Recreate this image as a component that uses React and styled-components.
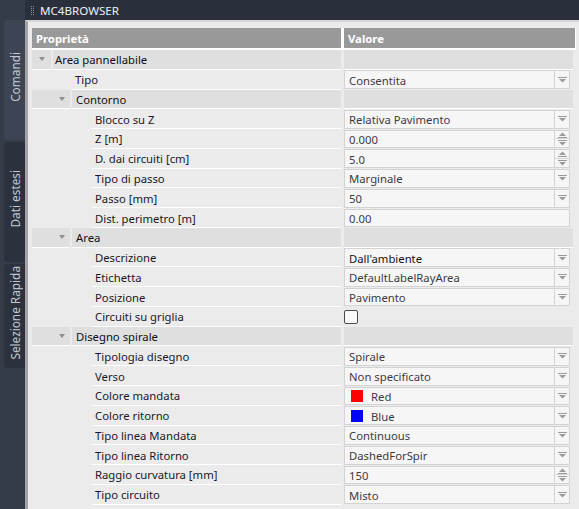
import React from "react";
import styled, { createGlobalStyle } from "styled-components";

const rows = [
  { kind: "cat", level: 0, label: "Area pannellabile" },
  { kind: "prop", level: 1, label: "Tipo", type: "select", value: "Consentita" },
  { kind: "cat", level: 1, label: "Contorno" },
  { kind: "prop", level: 2, label: "Blocco su Z", type: "select", value: "Relativa Pavimento" },
  { kind: "prop", level: 2, label: "Z [m]", type: "spin", value: "0.000" },
  { kind: "prop", level: 2, label: "D. dai circuiti [cm]", type: "spin", value: "5.0" },
  { kind: "prop", level: 2, label: "Tipo di passo", type: "select", value: "Marginale" },
  { kind: "prop", level: 2, label: "Passo [mm]", type: "select", value: "50" },
  { kind: "prop", level: 2, label: "Dist. perimetro [m]", type: "text", value: "0.00" },
  { kind: "cat", level: 1, label: "Area" },
  { kind: "prop", level: 2, label: "Descrizione", type: "select", value: "Dall'ambiente", strong: true },
  { kind: "prop", level: 2, label: "Etichetta", type: "select", value: "DefaultLabelRayArea" },
  { kind: "prop", level: 2, label: "Posizione", type: "select", value: "Pavimento" },
  { kind: "prop", level: 2, label: "Circuiti su griglia", type: "check" },
  { kind: "cat", level: 1, label: "Disegno spirale" },
  { kind: "prop", level: 2, label: "Tipologia disegno", type: "select", value: "Spirale" },
  { kind: "prop", level: 2, label: "Verso", type: "select", value: "Non specificato" },
  { kind: "prop", level: 2, label: "Colore mandata", type: "select", value: "Red", swatch: "#ff0000" },
  { kind: "prop", level: 2, label: "Colore ritorno", type: "select", value: "Blue", swatch: "#0000ff" },
  { kind: "prop", level: 2, label: "Tipo linea Mandata", type: "select", value: "Continuous" },
  { kind: "prop", level: 2, label: "Tipo linea Ritorno", type: "select", value: "DashedForSpir" },
  { kind: "prop", level: 2, label: "Raggio curvatura [mm]", type: "spin", value: "150" },
  { kind: "prop", level: 2, label: "Tipo circuito", type: "select", value: "Misto" },
];

function DownArrow() {
  return (
    <svg width="9" height="6" viewBox="0 0 9 6">
      <rect x="0" y="0" width="9" height="1" fill="#9a9a9a" />
      <path d="M1 2 H8 L4.5 5.5 Z" fill="#9a9a9a" />
    </svg>
  );
}

function UpArrow() {
  return (
    <svg width="9" height="6" viewBox="0 0 9 6">
      <path d="M1 4 H8 L4.5 0.5 Z" fill="#9a9a9a" />
      <rect x="0" y="5" width="9" height="1" fill="#9a9a9a" />
    </svg>
  );
}

function GripDots() {
  const dots = [];
  for (let i = 0; i < 5; i++) {
    dots.push(<rect key={"a" + i} x="0" y={i * 2} width="1" height="1" fill="#8d94a0" />);
    dots.push(<rect key={"b" + i} x="2" y={i * 2} width="1" height="1" fill="#8d94a0" />);
  }
  return (
    <svg width="3" height="9" viewBox="0 0 3 9">
      {dots}
    </svg>
  );
}

function ValueCell({ row }) {
  if (row.type === "check") {
    return (
      <Value>
        <Checkbox />
      </Value>
    );
  }
  return (
    <Value>
      <Box>
        <BoxText $strong={row.strong}>
          {row.swatch && <Swatch $color={row.swatch} />}
          {row.value}
        </BoxText>
        {row.type === "select" && (
          <ArrowZone>
            <DownArrow />
          </ArrowZone>
        )}
        {row.type === "spin" && (
          <SpinZone>
            <SpinHalf $top>
              <UpArrow />
            </SpinHalf>
            <SpinHalf>
              <DownArrow />
            </SpinHalf>
          </SpinZone>
        )}
      </Box>
    </Value>
  );
}

function Row({ row }) {
  if (row.kind === "cat") {
    return (
      <RowLine>
        <LabelPart>
          <Expander $level={row.level}>
            <Caret />
          </Expander>
          <CatLabel $level={row.level}>{row.label}</CatLabel>
        </LabelPart>
        <CatValue />
      </RowLine>
    );
  }
  return (
    <RowLine>
      <LabelPart>
        <PropLabel $level={row.level}>{row.label}</PropLabel>
      </LabelPart>
      <ValueCell row={row} />
    </RowLine>
  );
}

export default function App() {
  return (
    <>
      <GlobalStyle />
      <Window>
        <Sidebar>
          <Tab $active $h={120}>
            <TabText>Comandi</TabText>
          </Tab>
          <Tab $h={120}>
            <TabText>Dati estesi</TabText>
          </Tab>
          <Tab $h={104}>
            <TabText>Selezione Rapida</TabText>
          </Tab>
        </Sidebar>
        <Main>
          <TitleBar>
            <GripDots />
            MC4BROWSER
          </TitleBar>
          <Panel>
            <Grid>
              <HeaderRow>
                <HeadCell $w="309px">Proprietà</HeadCell>
                <HeadCell $w="auto">Valore</HeadCell>
              </HeaderRow>
              {rows.map((r) => (
                <Row key={r.label} row={r} />
              ))}
            </Grid>
          </Panel>
        </Main>
      </Window>
    </>
  );
}

const GlobalStyle = createGlobalStyle`
  html, body {
    margin: 0;
    padding: 0;
    background: #363d4b;
  }
  body {
    font-family: "Noto Sans", "Open Sans", sans-serif;
    font-size: 11.3px;
  }
`;

const Window = styled.div`
  display: flex;
  width: 579px;
  height: 509px;
  overflow: hidden;
`;

const Sidebar = styled.div`
  width: 25px;
  flex-shrink: 0;
  display: flex;
  flex-direction: column;
  gap: 2px;
  padding-top: 20px;
  background: #353c49;
`;

const Tab = styled.div`
  height: ${(p) => p.$h}px;
  margin-left: 4px;
  border-radius: 4px 0 0 4px;
  background: ${(p) => (p.$active ? "#3d4555" : "#2b323e")};
  display: flex;
  align-items: center;
  justify-content: center;
`;

const TabText = styled.span`
  writing-mode: vertical-rl;
  transform: rotate(180deg);
  color: #c4c9d2;
  font-size: 11.8px;
  white-space: nowrap;
  padding-top: 6px;
`;

const Main = styled.div`
  flex: 1;
  display: flex;
  flex-direction: column;
  min-width: 0;
`;

const TitleBar = styled.div`
  height: 20px;
  background: #2a303b;
  color: #eef0f4;
  display: flex;
  align-items: center;
  padding-left: 6px;
  font-size: 11.6px;
  gap: 6px;
`;

const Panel = styled.div`
  flex: 1;
  background: #ebebeb;
  border-top: 2px solid #d6d6d6;
  border-left: 3px solid #a3a3a3;
  padding: 6px 0 0 4px;
`;

const Grid = styled.div`
  width: 544px;
  display: flex;
  flex-direction: column;
`;

const HeaderRow = styled.div`
  display: flex;
  gap: 3px;
  height: 20px;
  background: #ffffff;
  border-bottom: 2px solid #ffffff;
  border-right: 1px solid #ffffff;
`;

const HeadCell = styled.div`
  width: ${(p) => p.$w};
  flex: ${(p) => (p.$w === "auto" ? 1 : "none")};
  background: #999999;
  color: #ffffff;
  font-weight: bold;
  display: flex;
  align-items: center;
  padding: 1px 0 0 4px;
  box-sizing: border-box;
`;

const RowLine = styled.div`
  display: flex;
  height: 19.77px;
  gap: 3px;
`;

const LabelPart = styled.div`
  width: 309px;
  flex-shrink: 0;
  display: flex;
`;

const Expander = styled.div`
  width: ${(p) => (p.$level === 0 ? 19 : 38)}px;
  background: #dfdfdf;
  border-bottom: 1px solid #ffffff;
  box-sizing: border-box;
  display: flex;
  align-items: center;
  justify-content: flex-end;
  padding-right: ${(p) => (p.$level === 0 ? 6 : 5)}px;
`;

const Caret = styled.span`
  width: 0;
  height: 0;
  border-left: 3.5px solid transparent;
  border-right: 3.5px solid transparent;
  border-top: 4px solid #8e8e8e;
`;

const CatLabel = styled.div`
  flex: 1;
  margin-left: 2px;
  background: #dfdfdf;
  border-bottom: 1px solid #ffffff;
  box-sizing: border-box;
  color: #101010;
  display: flex;
  align-items: center;
  padding: 1px 0 0 ${(p) => (p.$level === 0 ? 2 : 4)}px;
`;

const PropLabel = styled.div`
  flex: 1;
  margin-left: ${(p) => (p.$level === 1 ? 40 : 60)}px;
  border-bottom: 1px solid #ffffff;
  box-sizing: border-box;
  color: #1c1826;
  display: flex;
  align-items: center;
  padding: 1px 0 0 3px;
`;

const CatValue = styled.div`
  flex: 1;
  margin-right: 3px;
  background: #dfdfdf;
  border-bottom: 1px solid #ffffff;
  box-sizing: border-box;
`;

const Value = styled.div`
  flex: 1;
  display: flex;
  align-items: center;
  padding-right: 6px;
  min-width: 0;
`;

const Box = styled.div`
  flex: 1;
  height: 18.77px;
  box-sizing: border-box;
  border: 1px solid #d3d3d3;
  background: #f6f6f6;
  display: flex;
  align-items: stretch;
`;

const BoxText = styled.div`
  flex: 1;
  display: flex;
  align-items: center;
  padding: 1px 0 0 4px;
  color: ${(p) => (p.$strong ? "#141414" : "#3e3a44")};
  white-space: nowrap;
  overflow: hidden;
`;

const Swatch = styled.span`
  width: 12px;
  height: 12px;
  background: ${(p) => p.$color};
  margin: 0 8px 0 2px;
`;

const ArrowZone = styled.div`
  width: 14px;
  border-left: 1px solid #d3d3d3;
  display: flex;
  align-items: center;
  justify-content: center;
`;

const SpinZone = styled.div`
  width: 14px;
  border-left: 1px solid #d3d3d3;
  display: flex;
  flex-direction: column;
`;

const SpinHalf = styled.div`
  flex: 1;
  display: flex;
  align-items: ${(p) => (p.$top ? "flex-start" : "flex-end")};
  justify-content: center;
  padding: ${(p) => (p.$top ? "1px 0 0" : "0 0 1px")};
  border-bottom: ${(p) => (p.$top ? "1px solid #d3d3d3" : "none")};
`;

const Checkbox = styled.span`
  width: 12px;
  height: 12px;
  border: 1px solid #4a4a4a;
  border-radius: 2px;
  background: #fafafa;
`;
